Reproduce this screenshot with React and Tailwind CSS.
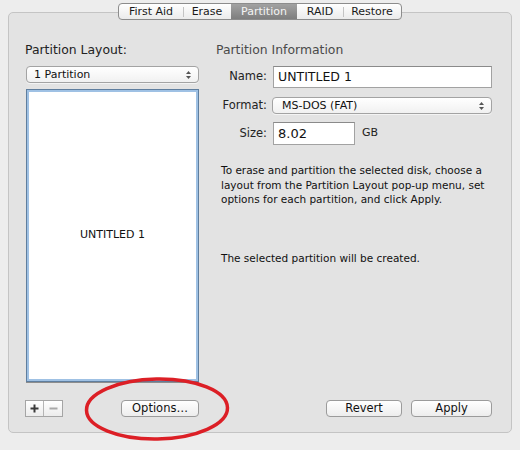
import React from "react";

function Arrows() {
  return (
    <svg width="7" height="10" viewBox="0 0 7 10" className="shrink-0">
      <path d="M3.5 1 L6 4 L1 4 Z" fill="#555" />
      <path d="M3.5 9 L6 6 L1 6 Z" fill="#555" />
    </svg>
  );
}

function Popup({ label, className }) {
  return (
    <div
      className={
        "flex items-center justify-between h-[17px] rounded-[4px] border border-[#a3a3a3] bg-linear-to-b from-white to-[#f1f1f1] shadow-[0_1px_0_rgba(255,255,255,0.6)] " +
        className
      }
    >
      <span className="text-[11px] leading-none text-[#111]">{label}</span>
      <Arrows />
    </div>
  );
}

function Button({ children, className }) {
  return (
    <div
      className={
        "flex items-center justify-center h-[17px] rounded-[4px] border border-[#9b9b9b] bg-linear-to-b from-white to-[#ededed] text-[11.5px] leading-none text-[#111] " +
        className
      }
    >
      {children}
    </div>
  );
}

const tabs = [
  { name: "First Aid", w: "w-[64px]" },
  { name: "Erase", w: "w-[48px]" },
  { name: "Partition", w: "w-[66px]", active: true },
  { name: "RAID", w: "w-[46px]" },
  { name: "Restore", w: "w-[58px]" },
];

export default function App() {
  return (
    <div className="relative w-[520px] h-[450px] overflow-hidden bg-[#ededed] text-[#111] [font-family:'DejaVu_Sans',sans-serif]">
      {/* tab bar */}
      <div className="relative z-10 flex justify-center pt-[3px]">
        <div className="flex h-[17px] rounded-[4px] border border-[#8c8c8c] overflow-hidden bg-linear-to-b from-white to-[#ebebeb]">
          {tabs.map((t, i) => {
            const prev = tabs[i - 1];
            const sep = i > 0 && !t.active && !(prev && prev.active);
            return (
              <div
                key={t.name}
                className={
                  "relative flex items-center justify-center text-[11px] leading-none " +
                  t.w +
                  (t.active
                    ? " bg-linear-to-b from-[#a2a2a2] to-[#7e7e7e] text-[#f4f4f4]"
                    : " text-[#1a1a1a]")
                }
              >
                {sep && (
                  <span className="absolute left-0 top-[3px] h-[10px] w-px bg-[#c4c4c4]" />
                )}
                {t.name}
              </div>
            );
          })}
        </div>
      </div>

      {/* main panel */}
      <div className="mx-[8px] -mt-[8px] h-[421px] rounded-[5px] border border-[#c4c4c4] bg-[#e3e3e3] flex pl-[17px] pr-[18px] pt-[29px] pb-[15px]">
        {/* left column */}
        <div className="w-[173px] flex flex-col">
          <div className="h-[16px] leading-[16px] text-[12.4px] text-[#222] -ml-px">
            Partition Layout:
          </div>
          <Popup label="1 Partition" className="mt-[8px] pl-[7px] pr-[6px]" />
          <div className="mt-[6px] h-[293px] border border-[#5f7e9e] shadow-[inset_0_0_0_2px_#9fc1e4] bg-white flex items-center justify-center">
            <span className="text-[11px] text-[#111]">UNTITLED 1</span>
          </div>
          <div className="h-px bg-[#8d8d8d]" />
          <div className="mt-auto flex items-center">
            <div className="flex h-[17px] border border-[#a5a5a5] bg-linear-to-b from-white to-[#ececec] -ml-px">
              <div className="w-[18px] flex items-center justify-center border-r border-[#b5b5b5]">
                <svg width="9" height="9" viewBox="0 0 9 9">
                  <path d="M4.5 0.5 V8.5 M0.5 4.5 H8.5" stroke="#3a3a3a" strokeWidth="2" />
                </svg>
              </div>
              <div className="w-[18px] flex items-center justify-center">
                <svg width="9" height="9" viewBox="0 0 9 9">
                  <path d="M0.5 4.5 H8.5" stroke="#a8a8a8" strokeWidth="2" />
                </svg>
              </div>
            </div>
            <Button className="ml-auto w-[78px]">Options…</Button>
          </div>
        </div>

        {/* right column */}
        <div className="w-[276px] ml-[17px] flex flex-col">
          <div className="h-[16px] leading-[16px] text-[12.4px] text-[#4a4a4a]">
            Partition Information
          </div>

          <div className="mt-[8px] flex items-center h-[22px]">
            <span className="w-[51px] text-right text-[11.5px] text-[#222]">Name:</span>
            <div className="ml-[6px] flex-1 h-[22px] border border-[#a2a2a2] border-t-[#8a8a8a] bg-white flex items-center pl-[4px]">
              <span className="text-[12.5px] leading-none text-[#111]">UNTITLED 1</span>
            </div>
          </div>

          <div className="mt-[9px] flex items-center h-[17px]">
            <span className="w-[51px] text-right text-[11.5px] text-[#222]">Format:</span>
            <Popup
              label="MS-DOS (FAT)"
              className="ml-[5px] flex-1 pl-[9px] pr-[6px]"
            />
          </div>

          <div className="mt-[8px] flex items-center h-[23px]">
            <span className="w-[51px] text-right text-[11.5px] text-[#222]">Size:</span>
            <div className="ml-[6px] w-[82px] h-[23px] border border-[#a2a2a2] border-t-[#8a8a8a] bg-white flex items-center pl-[4px]">
              <span className="text-[13px] leading-none text-[#111]">8.02</span>
            </div>
            <span className="ml-[7px] text-[11px] text-[#222]">GB</span>
          </div>

          <p className="mt-[18px] ml-[5px] whitespace-nowrap text-[10.5px] leading-[14.5px] text-[#111]">
            To erase and partition the selected disk, choose a
            <br />
            layout from the Partition Layout pop-up menu, set
            <br />
            options for each partition, and click Apply.
          </p>

          <p className="mt-[44px] ml-[5px] whitespace-nowrap text-[10.5px] leading-[14.5px] text-[#111]">
            The selected partition will be created.
          </p>

          <div className="mt-auto flex justify-end gap-[9px]">
            <Button className="w-[76px]">Revert</Button>
            <Button className="w-[81px]">Apply</Button>
          </div>
        </div>
      </div>

      {/* red annotation circle */}
      <svg
        className="absolute left-0 top-0 pointer-events-none"
        width="520"
        height="450"
        viewBox="0 0 520 450"
      >
        <ellipse
          cx="157"
          cy="409"
          rx="70.5"
          ry="30"
          fill="none"
          stroke="#dc1f26"
          strokeWidth="3.5"
          transform="rotate(-1 157 409)"
        />
      </svg>
    </div>
  );
}
